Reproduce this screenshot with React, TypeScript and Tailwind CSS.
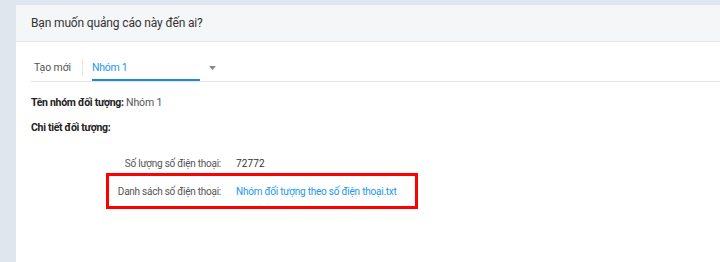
export default function App() {
  return (
    <div className="w-[720px] h-[262px] overflow-hidden bg-[#dfe6ee] pl-4 pt-[5px]" style={{ fontFamily: 'Roboto, "Noto Sans", sans-serif' }}>
      <div className="h-full bg-white">
        {/* Header */}
        <div className="h-[37px] bg-[#f5f6f8] border-b border-[#e4e6ea] flex items-center pl-[15px]">
          <span className="text-[12px] tracking-[-0.15px] text-[#333] whitespace-nowrap">Bạn muốn quảng cáo này đến ai?</span>
        </div>

        {/* Tabs */}
        <div className="mt-[14px] ml-[14px] border-b border-[#e6e6e6] flex items-start h-[26px]">
          <div className="h-[24px] leading-[24px] pl-[4px] pr-[11px] text-[10.5px] tracking-[-0.1px] text-[#555] whitespace-nowrap">Tạo mới</div>
          <div className="w-px h-[18px] bg-[#e6e6e6] mt-[2px]" />
          <div className="w-[108px] h-[25px] ml-[9px] border-b-2 border-[#1e88e5] leading-[24px] text-[10.5px] tracking-[-0.3px] text-[#2196f3] whitespace-nowrap">Nhóm 1</div>
          <div className="ml-[9px] pt-[10px]">
            <svg width="7" height="4" viewBox="0 0 7 4" className="block">
              <path d="M0 0 L7 0 L3.5 4 Z" fill="#8a8a8a" />
            </svg>
          </div>
        </div>

        <div className="pl-[15px] text-[#333]">
          <div className="mt-[13px] h-[16px] leading-[16px] text-[10.5px] tracking-[-0.3px] whitespace-nowrap">
            <span className="font-bold text-[#222]">Tên nhóm đối tượng:</span>{' '}
            <span className="text-[#555] tracking-[-0.1px]">Nhóm 1</span>
          </div>
          <div className="mt-[9px] h-[16px] leading-[16px] text-[10.5px] tracking-[-0.3px] font-bold text-[#222] whitespace-nowrap">
            Chi tiết đối tượng:
          </div>
        </div>

        <div className="mt-[20px] ml-[93px] flex h-[16px] leading-[16px] text-[10px] whitespace-nowrap">
          <div className="w-[112px] text-right text-[#555] tracking-[-0.25px]">Số lượng số điện thoại:</div>
          <div className="ml-[15px] text-[#333] tracking-[0.1px]">72772</div>
        </div>

        <div className="mt-[1px] ml-[90px] w-[312px] h-[36px] border-[3px] border-[#ff0000] flex items-center text-[10px] whitespace-nowrap">
          <div className="w-[112px] text-right text-[#555] tracking-[-0.25px]">Danh sách số điện thoại:</div>
          <div className="ml-[15px] text-[#2196f3] tracking-[-0.22px]">Nhóm đối tượng theo số điện thoại.txt</div>
        </div>
      </div>
    </div>
  );
}
